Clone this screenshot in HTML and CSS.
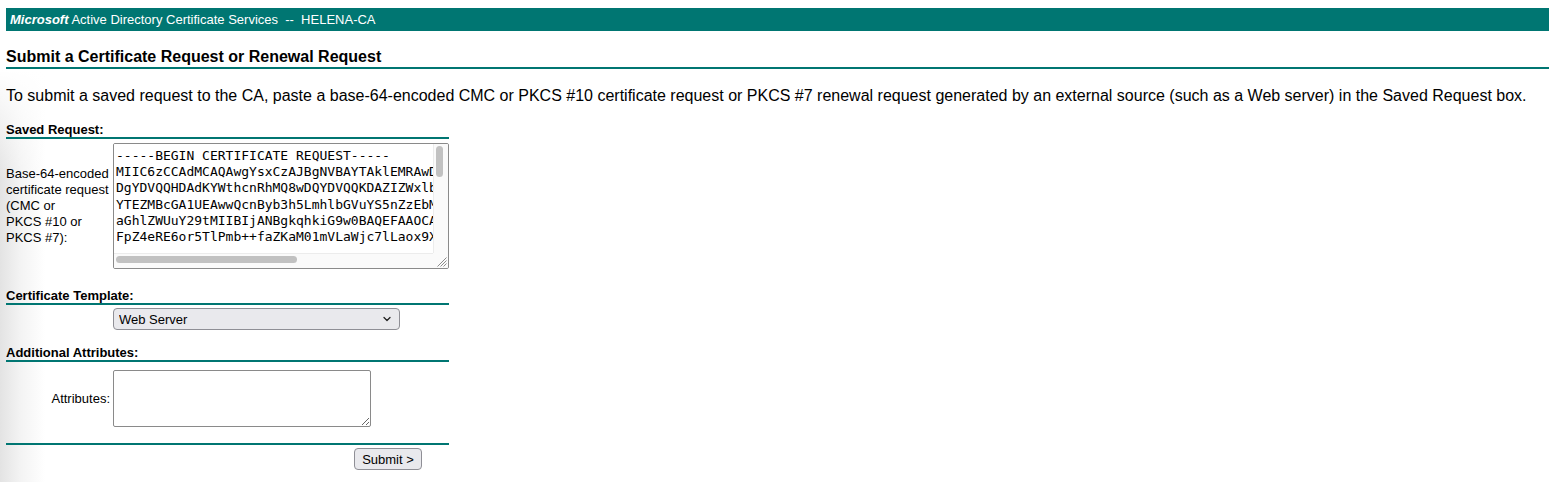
FILE: index.html
```html
<!DOCTYPE html>
<html lang="en">
<head>
<meta charset="utf-8">
<title>Microsoft Active Directory Certificate Services</title>
<link rel="stylesheet" href="styles.css">
</head>
<body>
<div class="banner"><span class="ms">Microsoft</span> Active Directory Certificate Services &nbsp;--&nbsp; HELENA-CA</div>
<h1 class="title">Submit a Certificate Request or Renewal Request</h1>
<p class="intro">To submit a saved request to the CA, paste a base-64-encoded CMC or PKCS #10 certificate request or PKCS #7 renewal request generated by an external source (such as a Web server) in the Saved Request box.</p>
<form class="form">
  <div class="section">Saved Request:</div>
  <div class="row">
    <label class="lbl" for="req">Base-64-encoded<br>certificate request<br>(CMC or<br>PKCS #10 or<br>PKCS #7):</label>
    <div class="ta-box">
      <textarea id="req" class="req" wrap="off" spellcheck="false">-----BEGIN CERTIFICATE REQUEST-----
MIIC6zCCAdMCAQAwgYsxCzAJBgNVBAYTAklEMRAwDgYDVQQIDAdKYWthcnRhMRAw
DgYDVQQHDAdKYWthcnRhMQ8wDQYDVQQKDAZIZWxlbmExGjAYBgNVBAsMEVByb3h5
YTEZMBcGA1UEAwwQcnByb3h5LmhlbGVuYS5nZzEbMBkGCSqGSIb3DQEJARYMYWRt
aGhlZWUuY29tMIIBIjANBgkqhkiG9w0BAQEFAAOCAQ8AMIIBCgKCAQEAw3Lq8nR2
FpZ4eRE6or5TlPmb++faZKaM01mVLaWjc7lLaox9Xk2bQvT1cJ8sWzr4YpN0aHeL
q1vTnB7mZcR4o2XkYw9dJfP3sLhE0uGaQ6iN8bVtC5yMrKx1OeWjS2zH4gFdA7Ul
Rn0pTqLb3XcV9mKyZs6EwJf8hGoD1aIu5tNeQ2rPvS7xBzMk4YlWcH0jFg9oUd3i
bXq6ZtN8rLw2JcVe1mKoP5sYgH3uDfA9nQzR7iE4lMxT0bWyC2vGkS6pOa8jUh1t
7fKcQ2mVxR9nLb4sTzEwYo1gHd5uPjA3iM8eWkN0qFvZl6CyDrB2tXhUo4aSg7Jp
Ie5HwQ0kLm3zVc8nTbR1yFo6sMjX4pNgA9dUq2lEvK7tCiW5hZrG0BxOeY3aJf1s
Mn8cPq4TzLg6VkW2oHdRb9sXy0EaF3uJtN7iQmC5lKe1ZpGv4AwSjB8rUhOx2Df9
wIDAQABoB4wHAYJKoZIhvcNAQkOMQ8wDTALBgNVHQ8EBAMCBaAwDQYJKoZIhvcN
BQADggEBAGx3Tq9LmZc1Vb8NwR4kJp2sHfY0eUa6tXoD7iQyC5gKzM3nWlE1vSrO
P0jT8uBbFh6aZcQm2yNdG4kLs9XwV1eRoJ7tIpA3gUvH5nCiYzM0qSbEw8fDlK2r
x4TkN9pWmQa7VcHf1sLzR6bG0jEyUo3tIiD8nXvCm5kYqP2hSgB9wAeZ1lJrF4Mu
Ot6cN0yHdRvKb3zWq8pLsE1fJx7mAiG5gT9uYkC2oVnB4eQh
-----END CERTIFICATE REQUEST-----</textarea>
      <div class="vbar"><div class="vthumb"></div></div>
      <div class="hbar"><div class="hthumb"></div></div>
      <div class="corner"><svg width="15" height="15" viewBox="0 0 15 15" aria-hidden="true"><path d="M13.5 4.5 L4.5 13.5 M13.5 7.5 L7.5 13.5 M13.5 10.5 L10.5 13.5" stroke="#8c8c8c" stroke-width="1" fill="none"/></svg></div>
    </div>
  </div>
  <div class="section">Certificate Template:</div>
  <div class="row row-sel">
    <span class="lbl"></span>
    <span class="select-wrap">
      <select class="select">
        <option>Web Server</option>
        <option>User</option>
        <option>Subordinate Certification Authority</option>
        <option>Administrator</option>
      </select>
      <svg class="chev" width="8" height="6" viewBox="0 0 8 6" aria-hidden="true"><path d="M1 1.5 L4 4.5 L7 1.5" fill="none" stroke="#222" stroke-width="1.3" stroke-linecap="round" stroke-linejoin="round"/></svg>
    </span>
  </div>
  <div class="section">Additional Attributes:</div>
  <div class="row row-attr">
    <label class="lbl lbl-right" for="attr">Attributes:</label>
    <textarea id="attr" class="attr"></textarea>
  </div>
  <div class="rule"></div>
  <div class="submit-row"><button type="button" class="btn">Submit &gt;</button></div>
</form>
</body>
</html>
```

FILE: styles.css
```css
html {
  background:
    linear-gradient(to bottom, #fff 70px, rgba(255,255,255,0) 180px),
    linear-gradient(to right, #e3e3e3 0, #f3f3f3 20px, #fff 45px);
  min-height: 100%;
}
body {
  margin: 8px 0 0 6px;
  font-family: "Liberation Sans", Arial, Helvetica, sans-serif;
  color: #000;
}
.banner {
  background: #007672;
  color: #fff;
  height: 23px;
  line-height: 23px;
  font-size: 13px;
  padding-left: 4px;
  white-space: nowrap;
}
.ms {
  font-weight: bold;
  font-style: italic;
}
.title {
  font-size: 16px;
  font-weight: bold;
  margin: 17px 0 0;
  line-height: 18px;
  padding-bottom: 1px;
  border-bottom: 2px solid #007672;
}
.intro {
  font-size: 16px;
  line-height: 18px;
  margin: 18px 0 0;
  white-space: nowrap;
}
.form {
  width: 443px;
  margin-top: 17px;
}
.section {
  font-size: 13px;
  font-weight: bold;
  line-height: 15px;
  border-bottom: 2px solid #007672;
}
.row {
  display: grid;
  grid-template-columns: 104px auto;
  column-gap: 3px;
  align-items: center;
  margin: 4px 0 19px;
}
.row-sel {
  margin: 3px 0 15px;
}
.row-attr {
  margin: 8px 0 16px;
}
.lbl {
  font-size: 13px;
  line-height: 16px;
}
.lbl-right {
  text-align: right;
}
.ta-box {
  box-sizing: border-box;
  width: 336px;
  height: 126px;
  border: 1px solid #8a8a8a;
  border-radius: 2px;
  background: #fff;
  overflow: hidden;
  display: grid;
  grid-template-columns: 1fr 15px;
  grid-template-rows: 1fr 15px;
}
.req {
  box-sizing: border-box;
  width: 100%;
  height: 101px;
  align-self: start;
  padding: 4px 2px 0;
  margin: 0;
  border: none;
  font-family: "DejaVu Sans Mono", Menlo, monospace;
  font-size: 13px;
  line-height: 16.2px;
  color: #000;
  background: #fff;
  resize: none;
  overflow: hidden;
  white-space: pre;
  outline: none;
}
.vbar {
  background: #fafafa;
  border-left: 1px solid #ececec;
  padding: 2px 0 0 2px;
}
.vthumb {
  width: 7px;
  height: 31px;
  border-radius: 4px;
  background: #c1c1c1;
}
.hbar {
  background: #fafafa;
  border-top: 1px solid #ececec;
  padding: 2px 0 0 2px;
}
.hthumb {
  width: 181px;
  height: 7px;
  border-radius: 4px;
  background: #c1c1c1;
}
.corner {
  background: #fafafa;
  line-height: 0;
}
.select-wrap {
  position: relative;
  display: inline-block;
  width: 287px;
  height: 22px;
}
.select {
  -webkit-appearance: none;
  appearance: none;
  box-sizing: border-box;
  width: 287px;
  height: 22px;
  border: 1px solid #8f8f96;
  border-radius: 4px;
  background: #e9e9ed;
  font-family: "Liberation Sans", Arial, Helvetica, sans-serif;
  font-size: 13px;
  color: #000;
  padding: 0 0 0 5px;
  margin: 0;
  outline: none;
}
.chev {
  position: absolute;
  right: 9px;
  top: 8px;
  pointer-events: none;
}
.attr {
  box-sizing: border-box;
  width: 258px;
  height: 57px;
  border: 1px solid #8a8a8a;
  border-radius: 2px;
  padding: 2px;
  margin: 0;
  background: #fff;
  font-family: "DejaVu Sans Mono", monospace;
  font-size: 13px;
  resize: both;
  outline: none;
}
.rule {
  height: 2px;
  background: #007672;
}
.submit-row {
  padding: 3px 0 0 348px;
}
.btn {
  box-sizing: border-box;
  width: 68px;
  height: 22px;
  padding: 0;
  border: 1px solid #8f8f96;
  border-radius: 4px;
  background: #e9e9ed;
  font-family: "Liberation Sans", Arial, Helvetica, sans-serif;
  font-size: 13px;
  color: #000;
}
```
